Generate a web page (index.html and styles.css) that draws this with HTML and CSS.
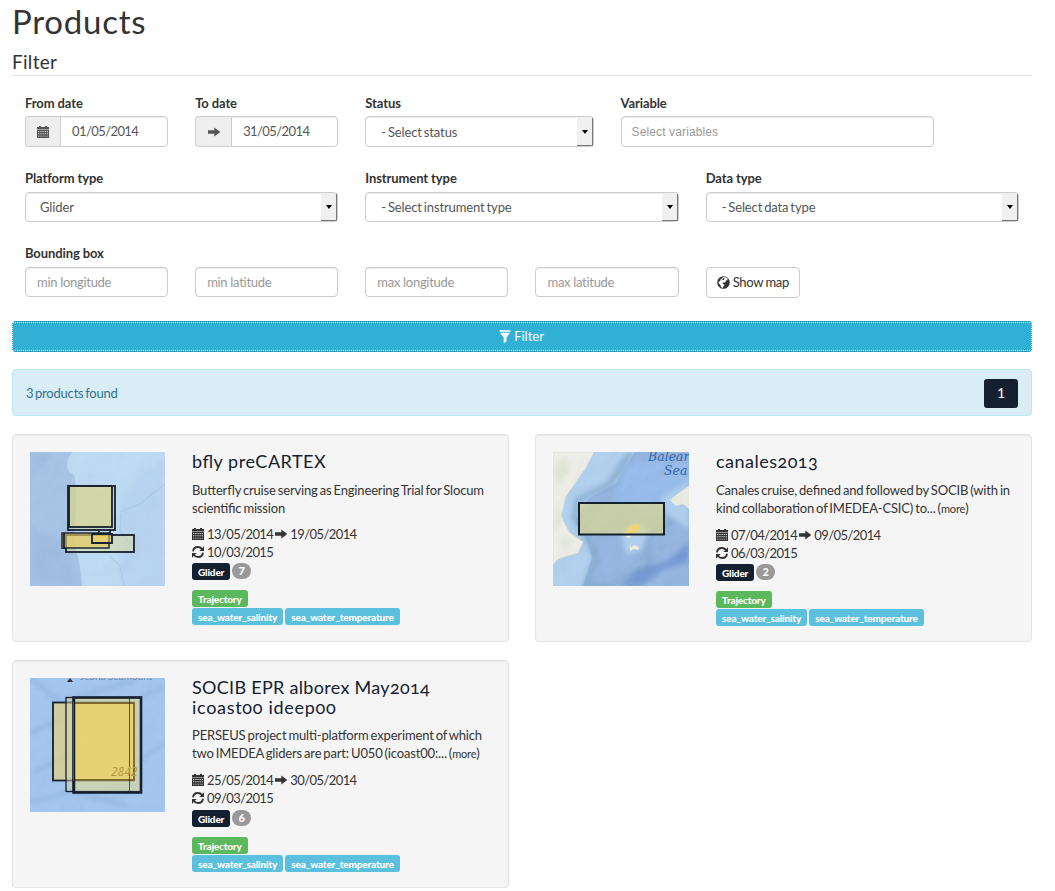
FILE: index.html
```html
<!DOCTYPE html>
<html lang="en">
<head>
<meta charset="utf-8">
<title>Products</title>
<link rel="stylesheet" href="styles.css">
</head>
<body>
<svg class="defs" width="0" height="0" aria-hidden="true">
  <defs>
    <symbol id="calendar" viewBox="0 0 12 12"><path fill="currentColor" fill-rule="evenodd" d="M0 1h2V0h2v1h4V0h2v1h2v2.400H0zM0 4h12v8H0zM1.200 5v.9h1.100V5zm2.200 0v.9h1.100V5zm2.100 0v.9h1.100V5zm2.100 0v.9h1.100V5zm2.100 0v.9h1.100V5zM1.200 7.300v.9h1.100v-.9zm2.200 0v.9h1.100v-.9zm2.100 0v.9h1.100v-.9zm2.100 0v.9h1.100v-.9zm2.100 0v.9h1.100v-.9zM1.200 9.700v.9h1.100v-.9zm2.200 0v.9h1.100v-.9zm2.100 0v.9h1.100v-.9zm2.100 0v.9h1.100v-.9zm2.100 0v.9h1.100v-.9z"/></symbol>
    <symbol id="arrow" viewBox="0 0 12 12"><path fill="currentColor" d="M0 4.300h6.300V1.500L12.200 6 6.300 10.500V7.700H0z"/></symbol>
    <symbol id="refresh" viewBox="0 0 12 12"><path fill="none" stroke="currentColor" stroke-width="1.900" d="M1 5.400C1.300 2.700 3.500 1 6 1c1.700 0 3 .7 4 2M11 6.600C10.700 9.300 8.500 11 6 11c-1.700 0-3-.7-4-2"/><path fill="currentColor" d="M12 .2v4.900H7.300zM0 11.800V6.900h4.700z"/></symbol>
    <symbol id="globe" viewBox="0 0 13 13"><circle cx="6.500" cy="6.500" r="6.300" fill="currentColor"/><path fill="#fff" d="M6.200 1.100 9 1.600l1.700 1.200-.5 1.500-1.400.3-.2 1.300-1.500.8-1.300-.2-.3 1.200 1.600.8.200 1.200-1.200.9-.3 1.300-1.700-.7-.7-2.300L1.900 7.500l-.5-1.600 1.800-1 .4-1.600 1.400-.8z"/><path fill="currentColor" d="m6.300 2.300 1.400.3-.6 1.500-1.300.2-.5-1z"/></symbol>
    <symbol id="funnel" viewBox="0 0 12 13"><path fill="currentColor" d="M.5.300h11v1.500H.5zM1 2.700h10L7.500 7.500v4L4.700 13V7.500z"/></symbol>
    <filter id="soft" x="-20%" y="-20%" width="140%" height="140%"><feGaussianBlur stdDeviation="2.500"/></filter>
    <filter id="edge"><feGaussianBlur stdDeviation=".5"/></filter>
    <filter id="relief" x="0" y="0" width="100%" height="100%"><feTurbulence type="fractalNoise" baseFrequency=".035" numOctaves="3" seed="8"/><feDiffuseLighting surfaceScale="3" lighting-color="#fff"><feDistantLight azimuth="225" elevation="50"/></feDiffuseLighting></filter>
  </defs>
</svg>
<main class="page">
  <h1><span>Products</span></h1>
  <form class="filter">
    <h2>Filter</h2>
    <div class="fields first">
      <div class="field w2"><label>From date</label><div class="group"><span class="addon from"><svg class="icon"><use href="#calendar"/></svg></span><input class="control date" value="01/05/2014"></div></div>
      <div class="field w2"><label>To date</label><div class="group"><span class="addon"><svg class="icon"><use href="#arrow"/></svg></span><input class="control date" value="31/05/2014"></div></div>
      <div class="field w3"><label>Status</label><div class="control select tall"><span class="st">- Select status</span><i></i></div></div>
      <div class="field w4"><label>Variable</label><input class="control tall plain" placeholder="Select variables"></div>
    </div>
    <div class="fields">
      <div class="field w4"><label>Platform type</label><div class="control select"><span>Glider</span><i></i></div></div>
      <div class="field w4"><label>Instrument type</label><div class="control select"><span class="st">- Select instrument type</span><i></i></div></div>
      <div class="field w4"><label>Data type</label><div class="control select"><span class="st">- Select data type</span><i></i></div></div>
    </div>
    <div class="fields last">
      <div class="field w2"><label>Bounding box</label><input class="control" placeholder="min longitude"></div>
      <div class="field w2"><input class="control" placeholder="min latitude"></div>
      <div class="field w2"><input class="control" placeholder="max longitude"></div>
      <div class="field w2"><input class="control" placeholder="max latitude"></div>
      <div class="field w2"><button type="button" class="map-btn"><svg class="icon globe"><use href="#globe"/></svg>Show map</button></div>
    </div>
    <button type="button" class="submit"><svg class="icon funnel"><use href="#funnel"/></svg>Filter</button>
  </form>
  <div class="found"><span>3 products found</span><a class="pager">1</a></div>
  <section class="cards">
    <article class="card">
      <svg class="thumb" viewBox="0 0 135 134" preserveAspectRatio="none">
        <rect width="135" height="134" fill="#bbd9f4"/>
        <path d="M0 0h42q-9 10-3 20l6 5q3 30-1 50 1 20 6 40l2 19H0z" fill="#a2c1e5" filter="url(#edge)"/>
        <path d="M0 0h25Q12 20 0 24zM0 75q25 5 40 25l9 34H0z" fill="#91b2da" opacity=".4" filter="url(#soft)"/>
        <path d="M135 5Q110 20 90 46v88h45z" fill="#b3d2f1" filter="url(#soft)"/>
        <path d="M42 0q-9 12-3 20l7 5M90 60l20-8 25-20M91 61l-1 18 12 15M80 104l10 10 4 20" fill="none" stroke="#a4c5e7" stroke-width="1.500" opacity=".6" filter="url(#edge)"/>
        <rect width="135" height="134" filter="url(#relief)" opacity=".08"/>
        <g stroke="#14202f" stroke-width="1.800">
          <rect x="38" y="34" width="47" height="44" fill="#d8d68c" fill-opacity=".45"/>
          <rect x="39" y="34" width="43" height="41" fill="#e6d278" fill-opacity=".38"/>
          <path d="M69 78v4h11v-4" fill="none"/>
          <rect x="36" y="83" width="68" height="17" fill="#dede9b" fill-opacity=".5"/>
          <rect x="32" y="81" width="47" height="15" fill="#e8ca5b" fill-opacity=".65" stroke-opacity=".8"/>
          <path d="M34 81v16M62 82h20v9H62z" fill="#edcf59" fill-opacity=".5"/>
        </g>
      </svg>
      <div class="info"><h3><span class="t1">bfly preCARTEX</span></h3><p>Butterfly cruise serving as Engineering Trial for Slocum<br>scientific mission</p>
        <div class="when"><svg class="icon"><use href="#calendar"/></svg><span>13/05/2014</span><svg class="icon to"><use href="#arrow"/></svg><span>19/05/2014</span></div>
        <div class="when upd"><svg class="icon"><use href="#refresh"/></svg><span>10/03/2015</span></div>
        <div class="tags"><b class="tag dark">Glider</b><b class="badge">7</b></div>
        <div class="tags kind"><b class="tag green">Trajectory</b></div>
        <div class="tags vars"><b class="tag blue">sea_water_salinity</b><b class="tag blue temp">sea_water_temperature</b></div>
      </div>
    </article>
    <article class="card">
      <svg class="thumb wide" viewBox="0 0 136 134" preserveAspectRatio="none">
        <rect width="136" height="134" fill="#8aafe0"/>
        <path d="M0 0h82L63 31 35 47 22 70l12 18 5 18-9 28H0z" fill="#a9cdee" filter="url(#edge)"/>
        <path d="M67 10h69v33L105 65 64 48z" fill="#8db8ef" opacity=".75" filter="url(#soft)"/>
        <path d="M78 0 56 33 25 48l-3 18 13 22 9 18-12 28h25l39-20-3-28 45-30" fill="none" stroke="#7ca5cd" stroke-width="7" opacity=".75" filter="url(#soft)"/>
        <path d="M136 28 107 47l6 15 23 15zM68 80l15-10 12 8-5 19-17 6z" fill="#a8ccef" filter="url(#soft)"/>
        <path d="m136 90-22 19-27 8-20 17h22l23-17 24-7z" fill="#557fc7" opacity=".65" filter="url(#soft)"/>
        <path d="M0 0h41l-9 17-19 27-5 20 8 16 14 10-5 11-20 6-5 6z" fill="#eeefe7" stroke="#d2deda" stroke-width=".7"/>
        <path d="M0 15l10-9 8 8-6 11-9 10zM3 52l5 10-2 12-6 2zM8 85l12 4-12 9z" fill="#d4dfc6" opacity=".6" filter="url(#soft)"/>
        <path d="m136 34-13 9-6 5 6 6 7-2 6 5z" fill="#e9ecdf"/>
        <path d="m72 84 7-1-3 3zm5 7 1 5 3-3 5 2-1 3-5-1-3 2z" fill="#f3edd5"/>
        <rect width="136" height="134" filter="url(#relief)" opacity=".12"/>
        <text x="95" y="8.500" class="sea">Balearic</text><text x="111" y="23" class="sea">Sea</text>
        <text x="87" y="141.500" class="depth">2715</text>
        <rect x="26" y="51" width="85" height="31.500" fill="#e9dc83" fill-opacity=".6" stroke="#14202f" stroke-width="2"/>
        <path d="m74 78 5-5 8-1-1 6-5 3h-9z" fill="#f0d477"/>
      </svg>
      <div class="info"><h3><span class="t2">canales2013</span></h3><p>Canales cruise, defined and followed by SOCIB (with in<br>kind collaboration of IMEDEA-CSIC) to... (<small>more</small>)</p>
        <div class="when"><svg class="icon"><use href="#calendar"/></svg><span>07/04/2014</span><svg class="icon to"><use href="#arrow"/></svg><span>09/05/2014</span></div>
        <div class="when upd"><svg class="icon"><use href="#refresh"/></svg><span>06/03/2015</span></div>
        <div class="tags"><b class="tag dark">Glider</b><b class="badge">2</b></div>
        <div class="tags kind"><b class="tag green">Trajectory</b></div>
        <div class="tags vars"><b class="tag blue">sea_water_salinity</b><b class="tag blue temp">sea_water_temperature</b></div>
      </div>
    </article>
    <article class="card tallcard">
      <svg class="thumb" viewBox="0 0 135 134" preserveAspectRatio="none">
        <rect width="135" height="134" fill="#9dc2f0"/>
        <path d="M0 55 30 42M0 96l45-21M110 20l25-11M105 83l30-17M0 0l30 23 75-20M0 125l40-12 58 15" fill="none" stroke="#86aee0" stroke-width="3" filter="url(#soft)"/>
        <rect width="135" height="134" filter="url(#relief)" opacity=".09"/>
        <path d="M37 4 40 0l3 4z" fill="#333"/><text x="50" y="1.500" class="place">Jebha Seamount</text>
        <g stroke="#14202f" stroke-width="1.800">
          <rect x="23" y="24.500" width="81" height="78" fill="#e7d27a" fill-opacity=".65"/>
          <rect x="36" y="19.500" width="75" height="94" fill="#d7d4a1" fill-opacity=".5" stroke-width="1.300"/>
          <rect x="43.500" y="19.500" width="67.500" height="95" fill="#dbd99b" fill-opacity=".35" stroke-width="2.600"/>
          <path d="M44 25h60v77H44z" fill="#efd15e" fill-opacity=".65" stroke="#796832"/>
          <path d="M44.500 20v94" fill="none" stroke-width="1.500"/><path d="M99.500 20v94" fill="none" stroke-width="1" stroke-opacity=".7"/>
        </g>
        <text x="81" y="98" class="sound">2842</text>
      </svg>
      <div class="info"><h3><span class="t3">SOCIB EPR alborex May2014</span><br><span class="t4">icoast00 ideep00</span></h3><p>PERSEUS project multi-platform experiment of which<br>two IMEDEA gliders are part: U050 (icoast00:... (<small>more</small>)</p>
        <div class="when"><svg class="icon"><use href="#calendar"/></svg><span>25/05/2014</span><svg class="icon to"><use href="#arrow"/></svg><span>30/05/2014</span></div>
        <div class="when upd"><svg class="icon"><use href="#refresh"/></svg><span>09/03/2015</span></div>
        <div class="tags"><b class="tag dark">Glider</b><b class="badge">6</b></div>
        <div class="tags kind"><b class="tag green">Trajectory</b></div>
        <div class="tags vars"><b class="tag blue">sea_water_salinity</b><b class="tag blue temp">sea_water_temperature</b></div>
      </div>
    </article>
  </section>
</main>
</body>
</html>
```
FILE: styles.css
```css
* { box-sizing: border-box; }
body { margin: 0; background: #fff; color: #333; font: 13px/18px Lato, sans-serif; overflow: hidden; }
.defs { display: block; }
.page { width: 1020px; margin-left: 12px; }
h1, h2, h3, p { margin: 0; font-weight: 400; }
h1 { height: 50px; padding-top: 3px; font-size: 33px; line-height: 36px; letter-spacing: .75px; }
h2 { height: 26px; border-bottom: 1px solid #e5e5e5; font-size: 19px; line-height: 24px; margin-bottom: 18px; letter-spacing: .3px; }
.fields { display: grid; grid-template-columns: repeat(12, 1fr); column-gap: 27px; height: 75px; margin: 0 13px; align-items: start; }
.fields.last { height: 83px; }
.field { display: flex; flex-direction: column; min-width: 0; }
.last .field { height: 53px; justify-content: flex-end; }
.w2 { grid-column: span 2; }
.w3 { grid-column: span 3; }
.w4 { grid-column: span 4; }
label { height: 23px; line-height: 18px; font-weight: 700; white-space: nowrap; letter-spacing: -.1px; }
.first label { height: 22px; }
.control { width: 100%; height: 30px; padding: 0 11px; border: 1px solid #ccc; border-radius: 4px; background: #fff; box-shadow: inset 0 1px 1px rgba(0,0,0,.075); color: #555; font: 13px/18px Lato, sans-serif; outline: 0; }
.control::placeholder { color: #999; opacity: 1; letter-spacing: -.3px; }
.tall { height: 31px; }
.plain { padding-left: 10px; font-family: "Liberation Sans", sans-serif; font-size: 12px; }
.control.plain::placeholder { letter-spacing: .12px; }
.group { display: flex; height: 31px; }
.addon { flex: 0 0 36px; display: flex; align-items: center; justify-content: center; padding-top: 1px; border: 1px solid #ccc; border-right: 0; border-radius: 4px 0 0 4px; background: #eee; color: #555; }
.addon.from { flex-basis: 35px; }
.date { height: 31px; min-width: 0; padding-bottom: 2px; border-radius: 0 4px 4px 0; letter-spacing: -.58px; }
.icon { flex: none; width: 12px; height: 12px; }
.select { display: flex; align-items: center; justify-content: space-between; padding: 0 0 0 14px; white-space: nowrap; letter-spacing: -.12px; word-spacing: -1.3px; }
.select .st { padding-left: 1px; }
.select i { display: flex; align-self: stretch; align-items: center; justify-content: center; width: 16px; margin-top: 1px; padding-left: 1px; border: solid #777; border-width: 0 1px 1px 0; background: #f0f0f0; }
.select i::before { content: ""; border: solid transparent; border-width: 4px 3.5px 0; border-top-color: #000; }
.map-btn { display: flex; align-items: center; width: 94px; height: 31px; padding: 0 10px 1px; gap: 3px; border: 1px solid #ccc; border-radius: 4px; background: #fff; color: #333; font: 13px Lato, sans-serif; white-space: nowrap; letter-spacing: -.3px; word-spacing: -.5px; }
.last .field:last-child { height: 54px; justify-content: flex-end; }
.globe { width: 13px; height: 13px; }
.submit { position: relative; display: flex; align-items: center; justify-content: center; gap: 3px; width: 100%; height: 31px; margin-top: -6px; padding: 0 1px 1px 0; border: 1px solid #269abc; border-radius: 3px; background: #31b0d5; color: #fff; font: 13px Lato, sans-serif; }
.submit::after { content: ""; position: absolute; inset: 0 -1px; border: 1px dotted #fff; }
.funnel { height: 13px; }
.found { display: flex; align-items: center; justify-content: space-between; height: 47px; margin-top: 17px; padding: 0 13px; border: 1px solid #bce8f1; border-radius: 4px; background: #d9edf7; color: #31708f; letter-spacing: -.2px; word-spacing: -1.5px; }
.pager { display: flex; align-items: center; justify-content: center; width: 34px; height: 29px; margin-top: 1px; border-radius: 3px; background: #142030; color: #fff; font-size: 14px; }
.cards { display: grid; grid-template-columns: 497px 497px; gap: 18px 26px; margin-top: 18px; }
.card { display: flex; height: 208px; padding: 17px; border: 1px solid #e3e3e3; border-radius: 4px; background: #f5f5f5; box-shadow: inset 0 1px 1px rgba(0,0,0,.05); }
.tallcard { height: 228px; }
.thumb { flex: none; width: 135px; height: 134px; margin-right: 27px; overflow: hidden; }
.wide { width: 136px; }
.sea { font: italic 12.5px "DejaVu Serif", serif; fill: #3468a8; }
.depth { font: 12px Lato, sans-serif; fill: #333; }
.place { font: 10px Lato, sans-serif; fill: #7189a8; }
.sound { font: italic 12px "Noto Sans", sans-serif; fill: #b59a49; }
.info { min-width: 0; white-space: nowrap; }
h3 { height: 20px; color: #142030; font-size: 18px; line-height: 20px; font-feature-settings: "liga", "onum"; }
h3 span { position: relative; top: -1px; }
.t1 { letter-spacing: .52px; }
.t2 { letter-spacing: .48px; }
.t3 { letter-spacing: .3px; }
.t4 { letter-spacing: .7px; }
.info p { margin-top: 9px; letter-spacing: -.16px; word-spacing: -1.15px; font-feature-settings: "liga"; }
small { font-size: 11px; }
.when { display: flex; align-items: center; height: 18px; margin-top: 8px; letter-spacing: -.58px; }
.when .icon { margin-right: 3px; color: #333; }
.when .to { margin: 0 3px 0 2px; }
.when.upd { height: 17px; margin-top: 0; }
.tags { display: flex; height: 18px; margin-top: 3px; align-items: flex-start; gap: 2px; }
.tags.kind { margin-top: 9px; }
.tags.vars { margin-top: 0; }
.tallcard h3 { height: 40px; }
.tallcard p { margin-top: 8px; }
.tallcard .upd { height: 18px; }
.tag { display: flex; align-items: center; height: 17px; padding: 0 6px; border-radius: 3px; color: #fff; font-size: 10px; font-weight: 900; letter-spacing: -.17px; }
.dark { background: #142030; }
.green { background: #5cb85c; }
.blue { background: #5bc0de; }
.badge { display: flex; align-items: center; justify-content: center; width: 19px; height: 16px; border-radius: 8px; background: #999; color: #fff; font-size: 11px; font-weight: 900; }
```
